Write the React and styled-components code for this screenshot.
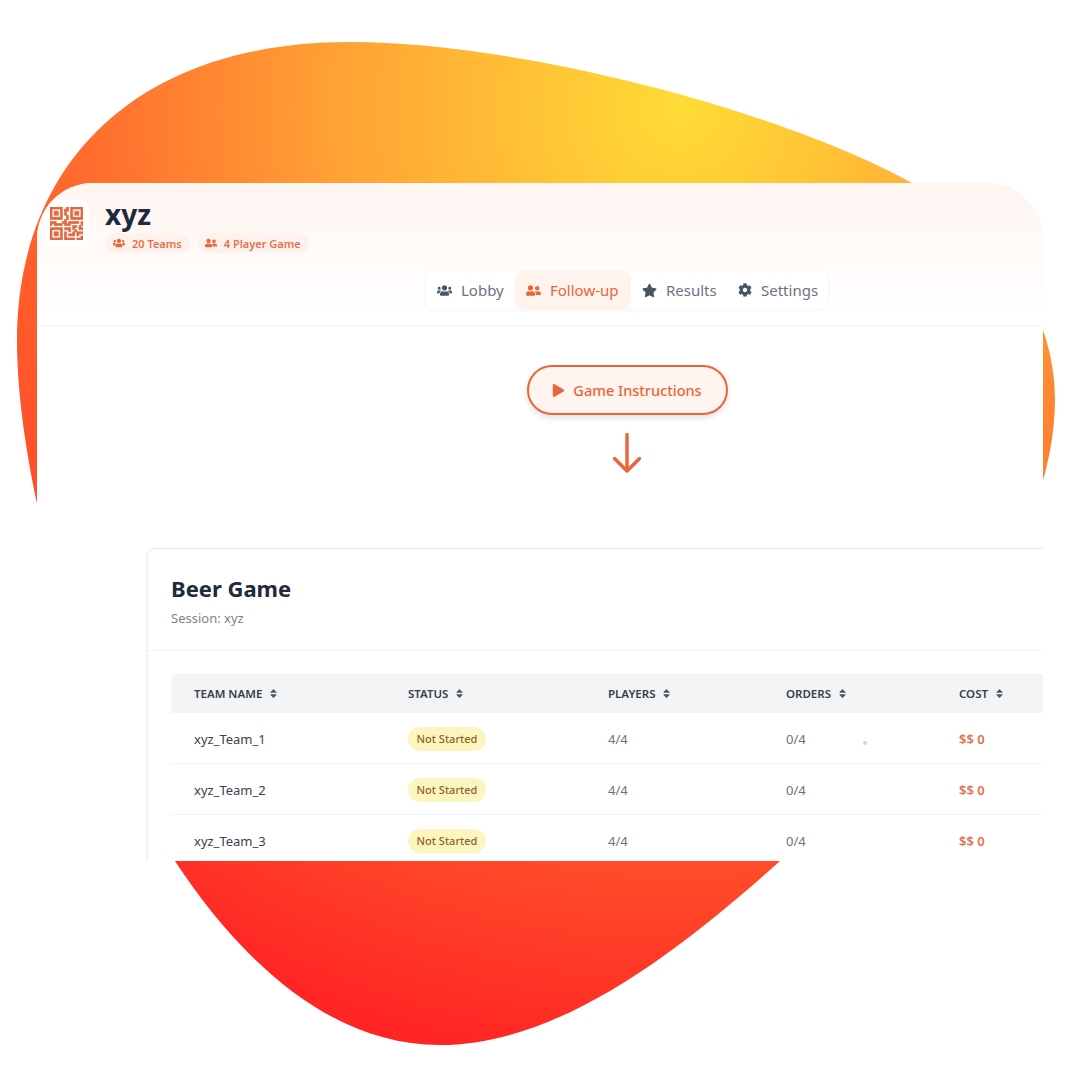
import styled, { createGlobalStyle } from 'styled-components';
import { FaUsers, FaUserFriends, FaStar, FaCog, FaPlay, FaSort } from 'react-icons/fa';
import { BsQrCode } from 'react-icons/bs';

const ACCENT = '#e8663a';

const GlobalStyle = createGlobalStyle`
  html, body {
    margin: 0;
    background: #fff;
  }
  * { box-sizing: border-box; }
`

const Stage = styled.div`
  position: relative;
  width: 1080px;
  height: 1080px;
  padding: 183px 37px 0;
  overflow: hidden;
  font-family: "Noto Sans", "Open Sans", sans-serif;
`

const Blob = styled.svg`
  position: absolute;
  top: 0;
  left: 0;
`

/** The browser window cut out on top of the blob */
const Window = styled.div`
  position: relative;
  width: 1006px;
  height: 678px;
  background: #fff;
  border-radius: 56px 56px 0 0;
  overflow: hidden;
`

// page is wider than the crop, that's why the tabs aren't centered in the window
const Page = styled.div`
  width: 1180px;
`

const Header = styled.header`
  height: 143px;
  padding: 17px 6px 0;
  background: linear-gradient(180deg, #fff5f1 0%, #ffffff 92%);
  border-bottom: 1px solid #f0f0f2;
`

const Brand = styled.div`
  display: flex;
  gap: 16px;
`

const LogoTile = styled.div`
  display: flex;
  align-items: center;
  justify-content: center;
  width: 46px;
  height: 47px;
  background: #fff;
  border-radius: 8px;
  color: #e06a42;
  font-size: 33px;
  svg {
    stroke: currentColor;
    stroke-width: 0.35;
  }
`

const Title = styled.h1`
  margin: -3px 0 0;
  font-size: 28px;
  line-height: 34px;
  font-weight: 700;
  color: #1f2a3c;
`

const PillRow = styled.div`
  display: flex;
  gap: 7px;
  margin-top: 2px;
`

const Pill = styled.span`
  display: flex;
  align-items: center;
  gap: 7px;
  height: 20px;
  padding: 0 8px;
  border-radius: 10px;
  background: #fff2ed;
  color: #e5714c;
  font-size: 11px;
  font-weight: 600;
  svg { font-size: 12px; color: ${ACCENT}; }
`

const Tabs = styled.nav`
  display: flex;
  width: 402px;
  margin: 18px auto 0;
  background: #fff;
  border-radius: 8px;
  box-shadow: 0 1px 4px rgba(0, 0, 0, 0.05);
`

const Tab = styled.div`
  display: flex;
  align-items: center;
  gap: 9px;
  height: 38px;
  padding-left: 11px;
  flex: 0 0 ${props => props.$width}px;
  border-radius: 8px;
  font-size: 15px;
  color: ${props => props.$active ? ACCENT : '#6b7280'};
  background: ${props => props.$active ? '#fff3ed' : 'transparent'};
  svg {
    font-size: ${props => props.$iconSize || 15}px;
    color: ${props => props.$active ? ACCENT : '#475569'};
  }
`

const Flow = styled.div`
  display: flex;
  flex-direction: column;
  align-items: center;
  padding-top: 39px;
`

const InstructionsButton = styled.button`
  display: flex;
  align-items: center;
  gap: 8px;
  width: 201px;
  height: 50px;
  justify-content: center;
  border: 2px solid ${ACCENT};
  border-radius: 25px;
  background: #fff4ef;
  color: ${ACCENT};
  font-family: inherit;
  font-size: 14.5px;
  font-weight: 500;
  box-shadow: 0 3px 6px rgba(0, 0, 0, 0.12);
  svg { font-size: 13px; }
`

const Arrow = styled.svg`
  margin-top: 18px;
  fill: none;
  stroke: ${ACCENT};
  stroke-width: 3.4;
  stroke-linecap: round;
  stroke-linejoin: round;
`

const Card = styled.section`
  width: 960px;
  margin: 75px auto 0;
  background: #fff;
  border: 1px solid #eceef0;
  border-radius: 8px;
  box-shadow: 0 1px 4px rgba(0, 0, 0, 0.06);
`

const CardHead = styled.div`
  height: 102px;
  padding: 24px 23px 0;
  border-bottom: 1px solid #f1f2f4;
`

const CardTitle = styled.h2`
  margin: 0;
  font-size: 22px;
  line-height: 30px;
  font-weight: 700;
  color: #1f2a3c;
`

const Session = styled.p`
  margin: 6px 0 0;
  font-size: 13px;
  line-height: 18px;
  color: #7b828d;
`

const Table = styled.div`
  margin: 23px 0 0 23px;
  width: 913px;
`

const Row = styled.div`
  display: grid;
  grid-template-columns: 214px 200px 178px 173px 1fr;
  align-items: center;
  height: 51px;
  padding-top: 1px;
  border-bottom: 1px solid #f3f4f6;
`

const HeadRow = styled(Row)`
  height: 39px;
  padding-top: 0;
  background: #f3f4f6;
  border-bottom: 0;
  border-radius: 8px 8px 0 0;
`

const HeadCell = styled.div`
  display: flex;
  align-items: center;
  gap: 6px;
  padding-left: 23px;
  font-size: 11.5px;
  font-weight: 600;
  text-transform: uppercase;
  color: #374151;
  svg { font-size: 11px; color: #4b5563; }
`

const Cell = styled.div`
  position: relative;
  padding-left: 23px;
  font-size: 13px;
  color: ${props => props.$strong ? '#374151' : '#6b7280'};
`

const Badge = styled.span`
  display: inline-flex;
  align-items: center;
  height: 24px;
  padding: 0 8.5px;
  border-radius: 12px;
  background: #fdf5c0;
  color: #8f6528;
  font-size: 11px;
  font-weight: 500;
`

const Cost = styled(Cell)`
  font-weight: 600;
  color: #e56f49;
`

/** stray cursor speck in the first row */
const Speck = styled.i`
  position: absolute;
  left: 100px;
  top: 11px;
  width: 4px;
  height: 4px;
  border-radius: 50%;
  background: #d4d6d9;
`

const COLUMNS = ['Team Name', 'Status', 'Players', 'Orders', 'Cost'];
const TEAMS = ['xyz_Team_1', 'xyz_Team_2', 'xyz_Team_3'];

export default function App() {
  return (
    <Stage>
      <GlobalStyle />
      <Blob width="1080" height="1080" viewBox="0 0 1080 1080">
        <defs>
          <radialGradient id="blobFill" gradientUnits="userSpaceOnUse" cx="680" cy="110" r="960">
            <stop offset="0" stopColor="#ffdc36" />
            <stop offset="0.36" stopColor="#ffa235" />
            <stop offset="0.62" stopColor="#ff6c2e" />
            <stop offset="1" stopColor="#ff2524" />
          </radialGradient>
        </defs>
        <path
          fill="url(#blobFill)"
          d="M350 42 C520 42 780 110 912 183 C985 225 1055 300 1055 400 C1055 560 890 770 780 861 C680 950 560 1045 440 1045 C330 1045 240 960 175 861 C90 730 17 490 17 340 C17 170 130 42 350 42Z"
        />
      </Blob>
      <Window>
        <Page>
          <Header>
            <Brand>
              <LogoTile><BsQrCode /></LogoTile>
              <div>
                <Title>xyz</Title>
                <PillRow>
                  <Pill><FaUsers />20 Teams</Pill>
                  <Pill><FaUserFriends />4 Player Game</Pill>
                </PillRow>
              </div>
            </Brand>
            <Tabs>
              <Tab $width={89}><FaUsers />Lobby</Tab>
              <Tab $width={116} $active><FaUserFriends />Follow-up</Tab>
              <Tab $width={96}><FaStar />Results</Tab>
              <Tab $width={101} $iconSize={14}><FaCog />Settings</Tab>
            </Tabs>
          </Header>
          <Flow>
            <InstructionsButton><FaPlay />Game Instructions</InstructionsButton>
            <Arrow width="28" height="40" viewBox="0 0 28 40">
              <path d="M14 1.5V38M1.5 25.5L14 38L26.5 25.5" />
            </Arrow>
          </Flow>
          <Card>
            <CardHead>
              <CardTitle>Beer Game</CardTitle>
              <Session>Session: xyz</Session>
            </CardHead>
            <Table>
              <HeadRow>
                {COLUMNS.map(name => (
                  <HeadCell key={name}>{name}<FaSort /></HeadCell>
                ))}
              </HeadRow>
              {TEAMS.map((team, i) => (
                <Row key={team}>
                  <Cell $strong>{team}</Cell>
                  <Cell><Badge>Not Started</Badge></Cell>
                  <Cell>4/4</Cell>
                  <Cell>0/4{i === 0 && <Speck />}</Cell>
                  <Cost>$$ 0</Cost>
                </Row>
              ))}
            </Table>
          </Card>
        </Page>
      </Window>
    </Stage>
  );
}
